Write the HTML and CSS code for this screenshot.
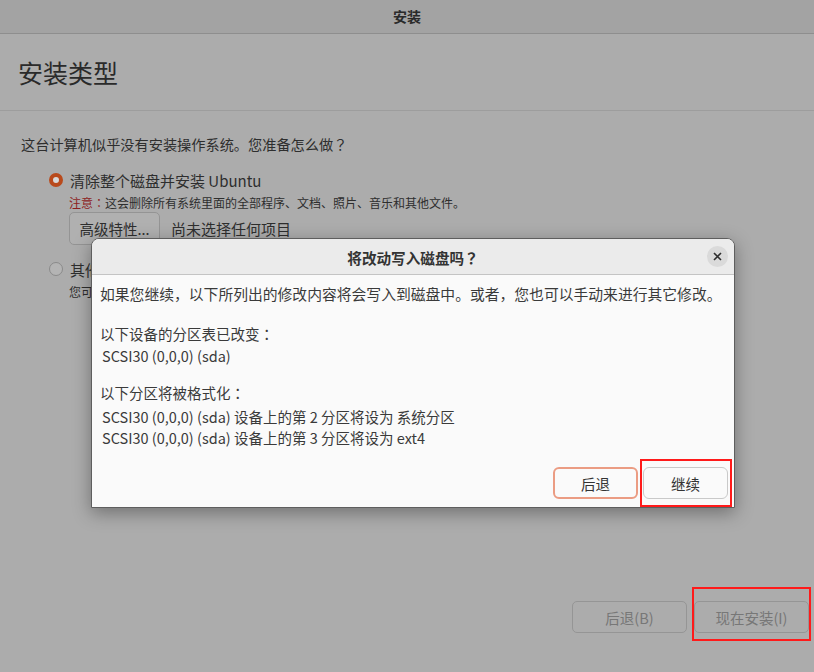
FILE: index.html
```html
<!DOCTYPE html>
<html lang="zh-CN">
<head>
    <meta charset="UTF-8">
    <meta name="viewport" content="width=device-width, initial-scale=1.0">
    <title>安装</title>
    <link rel="stylesheet" href="styles.css">
</head>
<body>
    <div class="window">
        <div class="titlebar">安装</div>
        <div class="header">
            <h1>安装类型</h1>
        </div>
        <div class="content">
            <p class="question">这台计算机似乎没有安装操作系统。您准备怎么做<span class="pc" lang="zh-TW">？</span></p>
            <div class="option">
                <span class="radio checked"></span>
                <span class="label">清除整个磁盘并安装 Ubuntu</span>
            </div>
            <div class="sub">
                <p class="note"><span class="warn">注意<span class="pc" lang="zh-TW">：</span></span>这会删除所有系统里面的全部程序、文档、照片、音乐和其他文件。</p>
                <div class="adv-row">
                    <button class="btn adv">高级特性...</button>
                    <span class="label">尚未选择任何项目</span>
                </div>
            </div>
            <div class="option second">
                <span class="radio"></span>
                <span class="label">其他选项</span>
            </div>
            <div class="sub">
                <p class="note">您可以自己创建、调整分区，或者为 Ubuntu 选择多个分区。</p>
            </div>
        </div>
        <div class="footer">
            <button class="btn nav">后退(B)</button>
            <button class="btn nav marked">现在安装(I)</button>
        </div>
    </div>

    <div class="dialog">
        <div class="dialog-head">
            <span class="dialog-title">将改动写入磁盘吗<span class="pc" lang="zh-TW">？</span></span>
            <span class="close">
                <svg width="9" height="9" viewBox="0 0 9 9"><path d="M1 1L8 8M8 1L1 8" stroke="#2e2e2e" stroke-width="1.6" fill="none"/></svg>
            </span>
        </div>
        <div class="dialog-body">
            <p class="intro">如果您继续，以下所列出的修改内容将会写入到磁盘中。或者，您也可以手动来进行其它修改。</p>
            <p class="group">以下设备的分区表已改变<span class="pc" lang="zh-TW">：</span></p>
            <p class="item">SCSI30 (0,0,0) (sda)</p>
            <p class="group second">以下分区将被格式化<span class="pc" lang="zh-TW">：</span></p>
            <p class="item">SCSI30 (0,0,0) (sda) 设备上的第 2 分区将设为 系统分区</p>
            <p class="item">SCSI30 (0,0,0) (sda) 设备上的第 3 分区将设为 ext4</p>
        </div>
        <div class="dialog-actions">
            <button class="btn dlg back">后退</button>
            <button class="btn dlg cont">继续</button>
        </div>
    </div>
</body>
</html>
```

FILE: styles.css
```css
body {
    margin: 0;
    background: #acacac;
    font-family: "Noto Sans CJK SC", "Noto Sans", sans-serif;
    color: #2e2e2e;
    font-size: 14.5px;
}
p {
    margin: 0;
}
/* centred full-width punctuation, like the reference */
.pc {
    font-family: "Noto Sans CJK TC", "Noto Sans CJK SC", sans-serif;
}
.window {
    height: 100vh;
    display: flex;
    flex-direction: column;
}
.titlebar {
    height: 33px;
    line-height: 33px;
    background: #a3a3a3;
    border-bottom: 1px solid #8e8e8e;
    text-align: center;
    font-weight: bold;
    font-size: 14px;
    color: #2a2a2a;
}
.header {
    height: 77px;
    border-bottom: 1px solid #9d9d9d;
    box-sizing: border-box;
    padding: 22px 18px 0;
}
.header h1 {
    margin: 0;
    font-size: 25px;
    font-weight: normal;
    line-height: 32px;
    color: #2a2a2a;
}
.content {
    padding: 23px 0 0 21px;
}
.question {
    line-height: 20px;
    font-size: 14.2px;
}
.option {
    display: flex;
    align-items: center;
    gap: 7px;
    margin: 16px 0 0 28px;
    height: 20px;
}
.option.second {
    margin-top: 14px;
}
.label {
    font-size: 15px;
}
.radio {
    width: 14px;
    height: 14px;
    border-radius: 50%;
    box-sizing: border-box;
    border: 1px solid #8a8a8a;
    background: #b4b4b4;
}
.radio.checked {
    border: 4px solid #b94a1c;
    background: #d9d9d9;
}
.sub {
    margin-left: 48px;
}
.note {
    font-size: 12px;
    line-height: 16px;
    margin-top: 5px;
}
.warn {
    color: #8c1e1e;
}
.adv-row {
    display: flex;
    align-items: center;
    gap: 11px;
    margin-top: 1px;
}
.btn {
    font-family: inherit;
    font-size: 14.5px;
    background: transparent;
    box-sizing: border-box;
    cursor: pointer;
}
.adv {
    width: 91px;
    height: 33px;
    border: 1px solid #949494;
    border-radius: 5px;
    color: #2e2e2e;
    background: #b0b0b0;
    padding: 0;
}
.footer {
    margin-top: auto;
    display: flex;
    justify-content: flex-end;
    gap: 7px;
    padding: 0 5px 39px 0;
}
.nav {
    width: 115px;
    height: 32px;
    border: 1px solid #959595;
    border-radius: 5px;
    color: #777;
    padding: 0;
}
.marked {
    position: relative;
}
.marked::after {
    content: "";
    position: absolute;
    left: -3px;
    right: -3px;
    top: -15px;
    bottom: -9px;
    border: 2px solid #ff1a1a;
}

/* dialog */
.dialog {
    position: absolute;
    left: 91px;
    top: 238px;
    width: 644px;
    height: 270px;
    box-sizing: border-box;
    border: 1px solid #5e5e5e;
    border-radius: 8px 8px 0 0;
    background: #fafafa;
    box-shadow: 0 5px 18px rgba(0, 0, 0, 0.35);
    display: flex;
    flex-direction: column;
    color: #3a3a3a;
}
.dialog-head {
    height: 35px;
    background: #ebebeb;
    border-bottom: 1px solid #c4c4c4;
    border-radius: 7px 7px 0 0;
    display: flex;
    align-items: center;
    justify-content: center;
    position: relative;
}
.dialog-title {
    font-weight: bold;
    font-size: 14.6px;
    color: #333;
    margin-top: 2px;
}
.close {
    position: absolute;
    right: 6px;
    top: 7px;
    width: 21px;
    height: 21px;
    border-radius: 50%;
    background: #dadada;
    display: flex;
    align-items: center;
    justify-content: center;
}
.dialog-body {
    padding: 9px 8px 0;
}
.intro {
    line-height: 20px;
    font-size: 14.8px;
}
.group {
    margin-top: 20px;
    line-height: 20px;
}
.group.second {
    margin-top: 17px;
}
.item {
    line-height: 21px;
    padding-left: 2px;
}
.group + .item {
    margin-top: 1px;
}
.group.second + .item {
    margin-top: 3px;
}
.dialog-actions {
    margin-top: auto;
    display: flex;
    justify-content: flex-end;
    gap: 5px;
    padding: 0 6px 8px 0;
}
.dlg {
    width: 85px;
    height: 32px;
    border-radius: 6px;
    color: #333;
    padding: 0;
    background: #fafafa;
}
.back {
    border: 2px solid #eb9c83;
}
.cont {
    border: 1px solid #c9c9c9;
    position: relative;
}
.cont::after {
    content: "";
    position: absolute;
    left: -4px;
    right: -5px;
    top: -9px;
    bottom: -9px;
    border: 2px solid #ff1a1a;
}
```
